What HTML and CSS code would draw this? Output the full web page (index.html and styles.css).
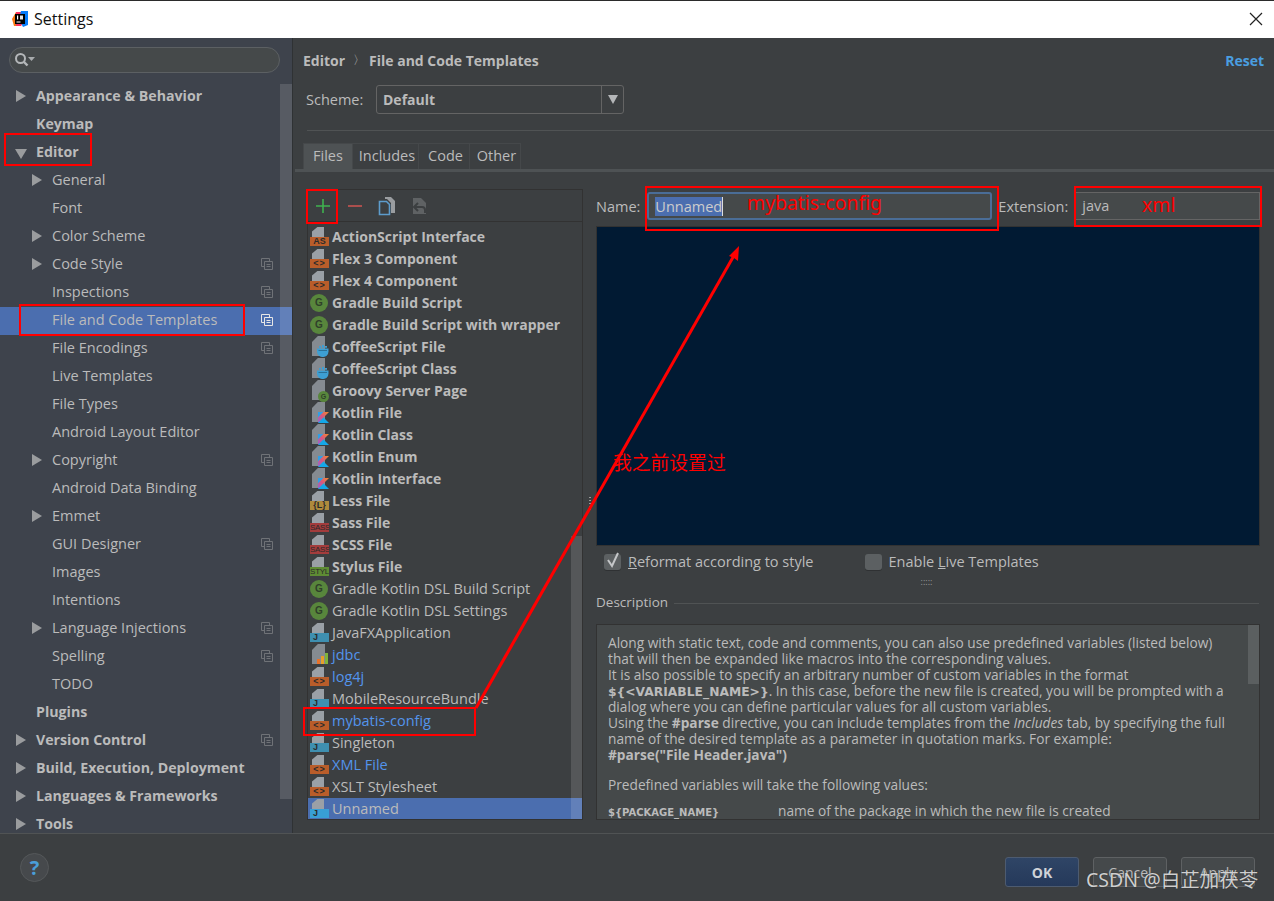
FILE: index.html
```html
<!DOCTYPE html>
<html lang="en">
<head>
<meta charset="utf-8">
<title>Settings</title>
<link rel="stylesheet" href="styles.css">
</head>
<body>
<svg class="defs" width="0" height="0">
  <defs>
    <symbol id="copy" viewBox="0 0 12 12"><path d="M8.500 3V.5h-8v8H3M3.500 3.500h8v8h-8zM5.500 6.500h4M5.500 8.500h4" fill="none" stroke="currentColor"/></symbol>
    <linearGradient id="kg" x1="0" y1="1" x2="1" y2="0"><stop offset="0" stop-color="#8f62d8"/><stop offset=".5" stop-color="#d9577f"/><stop offset="1" stop-color="#f58a26"/></linearGradient>
    <symbol id="kt" viewBox="0 0 9 9"><path d="M0 0h4.500L0 4.500z" fill="#2f9fe6"/><path d="M4.500 0H9L0 9V4.500z" fill="url(#kg)"/><path d="M0 9l4.500-4.500L9 9z" fill="#14a8e8"/></symbol>
    <symbol id="cup" viewBox="0 0 12 12"><path d="M0 3.500h11.500v3a5.700 5.500 0 0 1-11.500 0z" fill="#3d9fd3"/><path d="M2 1h2v1.800H2zM5 0h2v2.800H5zM8 1h2v1.800H8z" fill="#3d9fd3"/><path d="M1.500 5.500h8.500" stroke="#2a7198"/></symbol>
  </defs>
</svg>
<div class="window">
  <header class="titlebar">
    <svg class="app-logo" width="16" height="16" viewBox="0 0 16 16"><path d="M0 8L4 1h5L6 15H2z" fill="#f97a12"/><path d="M4 1h8l3 5-6 9H4z" fill="#fe315d"/><path d="M9 0h7v14l-5 2-4-8z" fill="#087cfa"/><rect x="3" y="3" width="10" height="10" fill="#000"/><rect x="4.500" y="10.500" width="4" height="1" fill="#fff"/><rect x="5" y="4.500" width="1.200" height="4" fill="#fff"/><rect x="8" y="4.500" width="3" height="4" fill="#fff" opacity=".9"/></svg>
    <span class="title">Settings</span>
    <svg class="close" width="14" height="14" viewBox="0 0 14 14"><path d="M1 1l12 12M13 1L1 13" stroke="#222" stroke-width="1.200" fill="none"/></svg>
  </header>

  <div class="main">
    <aside class="sidebar">
      <div class="search">
        <svg width="22" height="16" viewBox="0 0 22 16"><circle cx="6.500" cy="6.500" r="4.500" fill="none" stroke="#b4b7b9" stroke-width="2"/><path d="M10 10l3.500 3.500" stroke="#b4b7b9" stroke-width="2.400"/><path d="M14 5h7l-3.500 4z" fill="#a8abad"/></svg>
      </div>
      <div class="tree-wrap">
        <ul class="tree">
          <li class="node top"><i class="tri"></i>Appearance &amp; Behavior</li>
          <li class="node top">Keymap</li>
          <li class="node top"><i class="tri open"></i>Editor</li>
          <li class="node sub"><i class="tri"></i>General</li>
          <li class="node sub">Font</li>
          <li class="node sub"><i class="tri"></i>Color Scheme</li>
          <li class="node sub"><i class="tri"></i>Code Style<svg class="cp"><use href="#copy"/></svg></li>
          <li class="node sub">Inspections<svg class="cp"><use href="#copy"/></svg></li>
          <li class="node sub selected">File and Code Templates<svg class="cp"><use href="#copy"/></svg></li>
          <li class="node sub">File Encodings<svg class="cp"><use href="#copy"/></svg></li>
          <li class="node sub">Live Templates</li>
          <li class="node sub">File Types</li>
          <li class="node sub">Android Layout Editor</li>
          <li class="node sub"><i class="tri"></i>Copyright<svg class="cp"><use href="#copy"/></svg></li>
          <li class="node sub">Android Data Binding</li>
          <li class="node sub"><i class="tri"></i>Emmet</li>
          <li class="node sub">GUI Designer<svg class="cp"><use href="#copy"/></svg></li>
          <li class="node sub">Images</li>
          <li class="node sub">Intentions</li>
          <li class="node sub"><i class="tri"></i>Language Injections<svg class="cp"><use href="#copy"/></svg></li>
          <li class="node sub">Spelling<svg class="cp"><use href="#copy"/></svg></li>
          <li class="node sub">TODO</li>
          <li class="node top">Plugins</li>
          <li class="node top"><i class="tri"></i>Version Control<svg class="cp"><use href="#copy"/></svg></li>
          <li class="node top"><i class="tri"></i>Build, Execution, Deployment</li>
          <li class="node top"><i class="tri"></i>Languages &amp; Frameworks</li>
          <li class="node top"><i class="tri"></i>Tools</li>
        </ul>
        <div class="side-scroll"></div>
      </div>
    </aside>

    <section class="content">
      <div class="crumbs">
        <b>Editor</b><span class="sep">〉</span><b>File and Code Templates</b>
        <a class="reset">Reset</a>
      </div>
      <div class="scheme">
        <span class="scheme-label">Scheme:</span>
        <div class="combo"><b>Default</b><span class="combo-btn"><i></i></span></div>
      </div>
      <div class="rule"></div>
      <div class="tabs">
        <span class="tab active">Files</span><span class="tab">Includes</span><span class="tab">Code</span><span class="tab">Other</span>
      </div>
      <div class="tab-line"></div>

      <div class="split">
        <div class="list-panel">
          <div class="toolbar">
            <svg width="18" height="18" viewBox="0 0 18 18"><path d="M9 2v14M2 9h14" stroke="#3fb24f" stroke-width="1.600"/></svg>
            <svg class="minus" width="18" height="18" viewBox="0 0 18 18"><path d="M2 9h14" stroke="#c75450" stroke-width="1.600"/></svg>
            <svg width="20" height="20" viewBox="0 0 20 20"><path d="M8 1h6l4 4v12h-4V7L10 3H8z" fill="#9a9da0"/><path d="M2.500 5.500h7l3 3v10h-10z" fill="none" stroke="#5d9ccc" stroke-width="1.600"/></svg>
            <svg width="20" height="20" viewBox="0 0 20 20"><path d="M3 2h8l5 5v11H3z" fill="#5f6264"/><path d="M8 7l-4 4 4 4M5 11h7a3 3 0 0 1 3 3v3" fill="none" stroke="#3c3f41" stroke-width="2"/></svg>
          </div>
          <div class="list">
            <ul class="rows">
              <li class="row b"><span class="ic"><span class="doc"></span><span class="badge as">AS</span></span>ActionScript Interface</li>
              <li class="row b"><span class="ic"><span class="doc"></span><span class="badge xml">&lt;&gt;</span></span>Flex 3 Component</li>
              <li class="row b"><span class="ic"><span class="doc"></span><span class="badge xml">&lt;&gt;</span></span>Flex 4 Component</li>
              <li class="row b"><span class="ic"><span class="gr">G</span></span>Gradle Build Script</li>
              <li class="row b"><span class="ic"><span class="gr">G</span></span>Gradle Build Script with wrapper</li>
              <li class="row b"><span class="ic"><span class="tdoc"></span><svg class="over"><use href="#cup"/></svg></span>CoffeeScript File</li>
              <li class="row b"><span class="ic"><span class="tdoc"></span><svg class="over"><use href="#cup"/></svg></span>CoffeeScript Class</li>
              <li class="row b"><span class="ic"><span class="tdoc"></span><span class="gr small">G</span></span>Groovy Server Page</li>
              <li class="row b"><span class="ic"><span class="tdoc"></span><svg class="kt"><use href="#kt"/></svg></span>Kotlin File</li>
              <li class="row b"><span class="ic"><span class="tdoc"></span><svg class="kt"><use href="#kt"/></svg></span>Kotlin Class</li>
              <li class="row b"><span class="ic"><span class="tdoc"></span><svg class="kt"><use href="#kt"/></svg></span>Kotlin Enum</li>
              <li class="row b"><span class="ic"><span class="tdoc"></span><svg class="kt"><use href="#kt"/></svg></span>Kotlin Interface</li>
              <li class="row b"><span class="ic"><span class="doc"></span><span class="badge less">{L}</span></span>Less File</li>
              <li class="row b"><span class="ic"><span class="doc"></span><span class="badge sass">SASS</span></span>Sass File</li>
              <li class="row b"><span class="ic"><span class="doc"></span><span class="badge sass">SASS</span></span>SCSS File</li>
              <li class="row b"><span class="ic"><span class="doc"></span><span class="badge styl">STYL</span></span>Stylus File</li>
              <li class="row"><span class="ic"><span class="gr">G</span></span>Gradle Kotlin DSL Build Script</li>
              <li class="row"><span class="ic"><span class="gr">G</span></span>Gradle Kotlin DSL Settings</li>
              <li class="row"><span class="ic"><span class="doc"></span><span class="badge java">J</span></span>JavaFXApplication</li>
              <li class="row blue"><span class="ic"><span class="tdoc"></span><svg class="bars" width="11" height="11" viewBox="0 0 11 11"><rect x="0" y="6" width="3" height="5" fill="#e8722a"/><rect x="4" y="3" width="3" height="8" fill="#e8a02a"/><rect x="8" y="0" width="3" height="11" fill="#7fb23a"/></svg></span>jdbc</li>
              <li class="row blue"><span class="ic"><span class="doc"></span><span class="badge xml">&lt;&gt;</span></span>log4j</li>
              <li class="row"><span class="ic"><span class="doc"></span><span class="badge java">J</span></span>MobileResourceBundle</li>
              <li class="row blue"><span class="ic"><span class="doc"></span><span class="badge xml">&lt;&gt;</span></span>mybatis-config</li>
              <li class="row"><span class="ic"><span class="doc"></span><span class="badge java">J</span></span>Singleton</li>
              <li class="row blue"><span class="ic"><span class="doc"></span><span class="badge xml">&lt;&gt;</span></span>XML File</li>
              <li class="row"><span class="ic"><span class="doc"></span><span class="badge xml">&lt;&gt;</span></span>XSLT Stylesheet</li>
              <li class="row sel"><span class="ic"><span class="doc"></span><span class="badge java sel-j">J</span></span>Unnamed</li>
            </ul>
            <div class="list-scroll"></div>
          </div>
        </div>

        <div class="divider"><i></i></div>

        <div class="detail">
          <div class="name-row">
            <label>Name:</label>
            <div class="input focus"><span class="hl">Unnamed</span><span class="caret"></span></div>
            <label class="ext-label">Extension:</label>
            <div class="input ext">java</div>
          </div>
          <div class="editor"></div>
          <div class="checks">
            <span class="cb checked"><svg width="16" height="18" viewBox="0 0 16 18"><path d="M3 8l4 6 6-13" fill="none" stroke="#c4c6c8" stroke-width="2"/></svg></span><span class="cl"><u>R</u>eformat according to style</span>
            <span class="cb second"></span><span class="cl">Enable <u>L</u>ive Templates</span>
          </div>
          <div class="grip">:::::</div>
          <div class="legend"><span>Description</span><i></i></div>
          <div class="desc">
            <p>Along with static text, code and comments, you can also use predefined variables (listed below)<br>
            that will then be expanded like macros into the corresponding values.<br>
            It is also possible to specify an arbitrary number of custom variables in the format<br>
            <code class="v1">${&lt;VARIABLE_NAME&gt;}</code>. In this case, before the new file is created, you will be prompted with a<br>
            dialog where you can define particular values for all custom variables.<br>
            Using the <b>#parse</b> directive, you can include templates from the <em>Includes</em> tab, by specifying the full<br>
            name of the desired template as a parameter in quotation marks. For example:<br>
            <b class="ex">#parse("File Header.java")</b></p>
            <p class="pre">Predefined variables will take the following values:</p>
            <p class="var"><code class="v2">${PACKAGE_NAME}</code><span>name of the package in which the new file is created</span></p>
            <div class="desc-scroll"></div>
          </div>
        </div>
      </div>
    </section>
  </div>

  <footer class="footer">
    <span class="help">?</span>
    <div class="buttons">
      <button class="btn ok">OK</button>
      <button class="btn">Cancel</button>
      <button class="btn">Apply</button>
    </div>
  </footer>

  <svg class="annot" width="1274" height="901" viewBox="0 0 1274 901">
    <g fill="none" stroke="#f00" stroke-width="2">
      <rect x="5" y="134" width="86" height="31"/>
      <rect x="20" y="305" width="224" height="30"/>
      <rect x="307" y="190" width="30" height="33"/>
      <rect x="304" y="708" width="171" height="27"/>
      <rect x="646" y="187" width="352" height="43"/>
      <rect x="1075" y="187" width="186" height="39"/>
    </g>
    <path d="M476 708L736 252" stroke="#f00" stroke-width="3" fill="none"/>
    <path d="M739 246l-1 15-4-3-5-2z" fill="#f00"/>
  </svg>
  <span class="note n1">mybatis-config</span>
  <span class="note n2">xml</span>
  <span class="note n3">我之前设置过</span>
  <span class="mark">CSDN @白芷加茯苓</span>
</div>
</body>
</html>
```

FILE: styles.css
```css
* { box-sizing: border-box; }
html, body { margin: 0; padding: 0; }
body {
  width: 1274px; height: 901px; overflow: hidden;
  font-family: "Open Sans", "Noto Sans", sans-serif;
  font-size: 14.5px; color: #bbb; background: #3c3f41;
}
b { font-size: 14px; }
.defs { position: absolute; }
ul { list-style: none; margin: 0; padding: 0; }
p { margin: 0; }

.window { position: relative; width: 1274px; height: 901px; display: flex; flex-direction: column; }

.titlebar {
  height: 38px; flex: none; background: #fff; border-top: 1px solid #2b2b2b;
  display: flex; align-items: center; padding: 0 0 1px 12px; color: #111; font-size: 16px;
}
.app-logo { flex: none; }
.title { margin-left: 6px; }
.close { margin-left: auto; margin-right: 11px; }

.main { flex: 1; min-height: 0; display: flex; }

.sidebar { width: 293px; flex: none; background: #3e434c; border-right: 1px solid #2f3234; display: flex; flex-direction: column; overflow: hidden; }
.search {
  margin: 9px 12px 0 9px; height: 26px; border: 1px solid #5c6063; border-radius: 13px;
  background: #45494a; display: flex; align-items: center; padding-left: 4px; flex: none;
}
.tree-wrap { position: relative; flex: 1; min-height: 0; margin-top: 10px; overflow: hidden; }
.node { height: 28px; line-height: 26px; position: relative; white-space: nowrap; }
.top { padding-left: 36px; font-weight: 700; font-size: 14.200px; }
.sub { padding-left: 52px; }
.tri {
  position: absolute; top: 7px; width: 0; height: 0;
  border-top: 6px solid transparent; border-bottom: 6px solid transparent; border-left: 10px solid #9a9c9e;
}
.top .tri { left: 16px; }
.sub .tri { left: 32px; }
.top .tri.open { left: 15px; top: 10px; border-left: 6px solid transparent; border-right: 6px solid transparent; border-top: 10px solid #9a9c9e; border-bottom: 0; }
.cp { position: absolute; left: 261px; top: 7px; width: 12px; height: 12px; color: #6f7277; }
.selected { background: #4b6eaf; }
.selected .cp { color: #e6e6e6; }
.side-scroll { position: absolute; left: 280px; top: 1px; width: 12px; height: 715px; background: rgba(255,255,255,.13); }

.content { flex: 1; min-width: 0; display: flex; flex-direction: column; }
.crumbs { height: 44px; flex: none; display: flex; align-items: center; padding: 0 10px; }
.sep { margin-left: 8px; font-size: 12px; width: 16px; }
.reset { margin-left: auto; color: #4a9ee0; font-weight: 700; font-size: 14px; }
.scheme { height: 30px; margin-top: 2px; flex: none; display: flex; align-items: center; padding-left: 13px; }
.scheme-label { width: 71px; flex: none; margin-right: -1px; }
.combo {
  width: 248px; height: 29px; border: 1px solid #646464; border-radius: 3px;
  display: flex; align-items: center; padding-left: 6px; justify-content: space-between;
}
.combo-btn { width: 22px; height: 27px; border-left: 1px solid #646464; display: flex; align-items: center; justify-content: center; }
.combo-btn i { width: 0; height: 0; border-left: 5px solid transparent; border-right: 5px solid transparent; border-top: 9px solid #b4b6b8; }
.rule { height: 1px; flex: none; background: #505354; margin: 16px 0 0 14px; }
.tabs { height: 26px; flex: none; margin: 12px 0 0 10px; display: flex; }
.tab { height: 26px; line-height: 24px; text-align: center; padding-left: 3px; border: 1px solid #45484a; border-left: 0; border-bottom: 0; }
.tab:first-child { border-left: 1px solid #45484a; }
.tab.active { background: #4e5254; width: 50px; padding-left: 0; }
.tab:nth-child(2) { width: 66px; }
.tab:nth-child(3) { width: 51px; }
.tab:nth-child(4) { width: 51px; }
.tab-line { height: 3px; flex: none; margin-left: 2px; background: #4e5254; }

.split { flex: 1; min-height: 0; display: flex; padding: 17px 13px 13px 14px; }
.list-panel { width: 276px; flex: none; border: 1px solid #323232; display: flex; flex-direction: column; overflow: hidden; }
.toolbar { height: 32px; flex: none; border-bottom: 1px solid #323232; display: flex; align-items: center; padding-left: 6px; gap: 13px; }
.minus { margin-left: 1px; }
.list { position: relative; flex: 1; min-height: 0; overflow: hidden; padding-top: 4px; }
.row { height: 22px; line-height: 22px; padding-left: 24px; position: relative; white-space: nowrap; }
.b { font-weight: 700; font-size: 14px; }
.blue { color: #5394ec; }
.sel { background: #4b6eaf; }
.ic { position: absolute; left: 1px; top: 0; width: 20px; height: 22px; }
.doc { position: absolute; left: 3px; top: 1px; width: 12px; height: 10px; background: #9aa0a6; clip-path: polygon(45% 0, 100% 0, 100% 100%, 0 100%, 0 45%); }
.tdoc { position: absolute; left: 3px; top: 0; width: 13px; height: 20px; background: #858b91; clip-path: polygon(45% 0, 100% 0, 100% 100%, 0 100%, 0 30%); }
.badge { position: absolute; left: 1px; top: 11px; width: 19px; height: 9px; font: 700 9px/9px "Liberation Sans", sans-serif; text-align: center; color: #2b2b2b; overflow: hidden; }
.as, .xml { background: #b95d2a; }
.xml { letter-spacing: 1px; }
.less { background: #ae8a3c; }
.sass { background: #a33c3c; font-weight: 400; font-size: 8px; letter-spacing: -.3px; }
.styl { background: #5e8c34; font-weight: 400; font-size: 8px; letter-spacing: -.3px; }
.java { background: #3e8fb0; text-align: left; padding-left: 3px; }
.sel-j { background: #389fd6; }
.gr { position: absolute; left: 1px; top: 2px; width: 18px; height: 18px; border-radius: 50%; background: #58863c; color: #2f3f2a; font: 700 10px/18px "Liberation Sans", sans-serif; text-align: center; }
.gr.small { left: 9px; top: 11px; width: 11px; height: 11px; font-size: 7px; line-height: 11px; }
.over { position: absolute; left: 8px; top: 9px; width: 12px; height: 12px; }
.bars { position: absolute; left: 8px; top: 9px; }
.kt { position: absolute; left: 9px; top: 10px; width: 11px; height: 11px; }
.list-scroll { position: absolute; left: 263px; top: 314px; bottom: 0; width: 11px; background: rgba(255,255,255,.13); }

.divider { width: 13px; flex: none; position: relative; }
.divider i { position: absolute; left: 6px; top: 308px; width: 2px; height: 15px; background: repeating-linear-gradient(#9a9a9a 0 1px, transparent 1px 3px); }

.detail { flex: 1; min-width: 0; display: flex; flex-direction: column; }
.name-row { height: 37px; flex: none; display: flex; align-items: flex-start; padding-top: 3px; }
.name-row label { line-height: 29px; white-space: nowrap; }
.input { height: 28px; line-height: 28px; background: #45494a; border: 1px solid #646464; color: #bbb; }
.focus { width: 345px; margin-left: 7px; border: 2px solid #4a6d97; border-radius: 3px; padding-left: 6px; line-height: 25px; display: flex; align-items: center; }
.hl { background: #4b6eaf; color: #ccc; height: 19px; line-height: 19px; }
.caret { width: 1px; height: 19px; background: #ddd; }
.ext-label { margin-left: 6px; }
.ext { width: 185px; margin-left: 7px; padding-left: 6px; line-height: 26px; }
.editor { height: 320px; flex: none; background: #011a33; border: 1px solid #323232; margin-right: 1px; }
.checks { height: 32px; flex: none; display: flex; align-items: center; padding-left: 8px; }
.cb { width: 17px; height: 16px; border-radius: 3px; background: #5c6062; box-shadow: 0 1px 0 #2f3133; position: relative; }
.cb svg { position: absolute; left: 1px; top: -2px; }
.cb.second { margin-left: 51px; }
.cl { margin: 0 0 2px 7px; }
.grip { height: 7px; flex: none; font-size: 9px; line-height: 7px; text-align: center; color: #9a9a9a; padding-right: 4px; }
.legend { height: 20px; flex: none; margin-top: 8px; display: flex; align-items: center; font-size: 13.500px; }
.legend span { margin-bottom: 2px; }
.legend i { flex: 1; height: 1px; background: #505354; margin: 0 2px 0 6px; }
.desc { position: relative; flex: 1; min-height: 0; margin-top: 11px; background: #45494a; border: 1px solid #323232; padding: 10px 11px 0; font-size: 13.700px; line-height: 16px; overflow: hidden; margin-right: 1px; white-space: nowrap; }
.desc b { font-size: 13.700px; }
.desc code { font-family: "DejaVu Sans", sans-serif; font-weight: 700; line-height: 1; }
.v1 { font-size: 12.300px; }
.v2 { font-size: 10px; width: 170px; display: inline-block; }
.pre { margin-top: 14px; }
.var { margin-top: 10px; }
.desc-scroll { position: absolute; right: 0; top: 0; width: 11px; height: 59px; background: #5b5f60; }

.footer { height: 68px; flex: none; border-top: 1px solid #505354; display: flex; align-items: flex-start; position: relative; }
.help { margin: 19px 0 0 20px; width: 29px; height: 29px; border-radius: 50%; background: #46494c; border: 1px solid #55585a; color: #4a9ed8; font: 700 20px/27px "Open Sans", sans-serif; text-align: center; }
.buttons { margin: 23px 19px 0 auto; display: flex; gap: 14px; }
.btn { width: 74px; height: 30px; background: #45494b; border: 1px solid #5e6163; border-radius: 3px; color: #bbb; font: 14px "Open Sans", sans-serif; padding: 0; }
.btn.ok { background: linear-gradient(#2f4566, #25395a); border-color: #4d5b70; color: #d0d4d8; font-weight: 700; }

.annot { position: absolute; left: 0; top: 0; pointer-events: none; }
.note { position: absolute; color: #f00; font-family: "Noto Sans", "Noto Sans CJK SC", sans-serif; white-space: nowrap; }
.n1 { left: 747px; top: 190px; font-size: 19.400px; line-height: 26px; }
.n2 { left: 1142px; top: 192px; font-size: 19.400px; line-height: 26px; }
.n3 { left: 613px; top: 449px; font-size: 18.800px; line-height: 26px; font-family: "Noto Sans CJK SC", sans-serif; }
.mark { position: absolute; left: 1086px; top: 866px; color: rgba(255,255,255,.78); font: 19.500px/28px "Noto Sans", "Noto Sans CJK SC", sans-serif; white-space: nowrap; text-shadow: 0 0 1px #222; }
```
